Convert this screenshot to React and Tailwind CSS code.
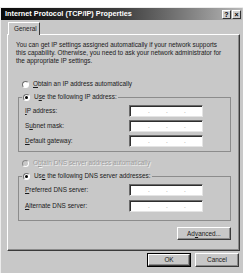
import React from "react";

function Radio({ checked }) {
  return (
    <span className="w-[7px] h-[7px] shrink-0 rounded-full border border-t-[#6e6e6e] border-l-[#6e6e6e] border-r-white border-b-white bg-white flex items-center justify-center">
      {checked && <span className="w-[3px] h-[3px] rounded-full bg-black" />}
    </span>
  );
}

function IpField() {
  return (
    <div className="w-[74px] h-[12px] bg-white border border-t-[#6a6a6a] border-l-[#6a6a6a] border-r-[#e4e4e4] border-b-[#e4e4e4] shadow-[inset_1px_1px_0_#2e2e2e] flex items-center pl-[2px] text-[#9a9a9a]">
      <span className="flex-1" />
      <span className="w-[2px] leading-[6px]">.</span>
      <span className="flex-1" />
      <span className="w-[2px] leading-[6px]">.</span>
      <span className="flex-1" />
      <span className="w-[2px] leading-[6px]">.</span>
      <span className="flex-1" />
    </div>
  );
}

function FieldRow({ children }) {
  return (
    <div className="flex items-center h-[12px] pl-[6px]">
      <span className="w-[104px]">{children}</span>
      <IpField />
    </div>
  );
}

function Button({ children, isDefault, className }) {
  return (
    <div className={isDefault ? "border border-black flex " + className : "flex " + className}>
      <div className="flex-1 flex items-center justify-center border border-t-white border-l-white border-r-[#3a3a3a] border-b-[#3a3a3a] shadow-[inset_-1px_-1px_0_#8a8a8a]">
        {children}
      </div>
    </div>
  );
}

export default function App() {
  return (
    <div className="w-[243px] h-[273px] bg-white overflow-hidden font-['Liberation_Sans',Arial,sans-serif] text-[6.4px] leading-[8px] text-[#1a1a1a]">
      <div className="h-[7px]" />
      <div className="h-[266px] bg-[#c8c8c8] border-t border-l border-[#ececec] flex flex-col">
        <div className="h-[12px] mr-[1px] bg-gradient-to-r from-[#0a0a0a] via-[#404040] to-[#b8b8b8] flex items-center pl-[4px] pr-[1px]">
          <span className="flex-1 text-white font-bold text-[7.3px]">
            Internet Protocol (TCP/IP) Properties
          </span>
          <span className="w-[9px] h-[9px] bg-[#cfcfcf] border border-t-white border-l-white border-r-[#333] border-b-[#333] flex items-center justify-center font-bold text-[7px] leading-none text-black">
            ?
          </span>
          <span className="w-[9px] h-[9px] ml-[1px] bg-[#cfcfcf] border border-t-white border-l-white border-r-[#333] border-b-[#333] flex items-center justify-center font-bold text-[7px] leading-none text-black">
            ×
          </span>
        </div>

        <div className="relative z-10 mt-[2px] mb-[-1px] ml-[7px] w-[32px] h-[13px] bg-[#c8c8c8] border-t border-l border-white border-r border-r-[#3a3a3a] rounded-t-[1px] flex items-center pl-[5px] text-[#222]">
          General
        </div>

        <div className="ml-[6px] w-[233px] h-[217px] border border-t-white border-l-white border-r-[#3a3a3a] border-b-[#3a3a3a] shadow-[inset_-1px_-1px_0_#8a8a8a] flex flex-col">
          <p className="mt-[6px] ml-[8px]">
            You can get IP settings assigned automatically if your network supports
            <br />
            this capability. Otherwise, you need to ask your network administrator for
            <br />
            the appropriate IP settings.
          </p>

          <div className="mt-[14px] ml-[14px] h-[10px] flex items-center gap-[4px]">
            <Radio />
            <span>
              <u>O</u>btain an IP address automatically
            </span>
          </div>

          <fieldset className="mt-[3px] ml-[10px] w-[213px] border border-[#8c8c8c] pb-[4px] flex flex-col gap-[3px]">
            <legend className="ml-[3px] px-[1px] h-[10px] flex items-center gap-[4px]">
              <Radio checked />
              <span>
                U<u>s</u>e the following IP address:
              </span>
            </legend>
            <div className="h-0" />
            <FieldRow>
              <u>I</u>P address:
            </FieldRow>
            <FieldRow>
              S<u>u</u>bnet mask:
            </FieldRow>
            <FieldRow>
              <u>D</u>efault gateway:
            </FieldRow>
          </fieldset>

          <div className="mt-[6px] ml-[14px] h-[10px] flex items-center gap-[4px] text-[#9c9c9c] [text-shadow:1px_1px_0_#f2f2f2]">
            <span className="w-[7px] h-[7px] shrink-0 rounded-full border border-t-[#8a8a8a] border-l-[#8a8a8a] border-r-white border-b-white bg-[#c8c8c8]" />
            <span>
              O<u>b</u>tain DNS server address automatically
            </span>
          </div>

          <fieldset className="mt-[3px] ml-[10px] w-[213px] border border-[#8c8c8c] pb-[8px] flex flex-col gap-[4px]">
            <legend className="ml-[3px] px-[1px] h-[10px] flex items-center gap-[4px]">
              <Radio checked />
              <span>
                Us<u>e</u> the following DNS server addresses:
              </span>
            </legend>
            <div className="h-0 mb-[-1px]" />
            <FieldRow>
              <u>P</u>referred DNS server:
            </FieldRow>
            <FieldRow>
              <u>A</u>lternate DNS server:
            </FieldRow>
          </fieldset>

          <div className="mt-[6px] mr-[8px] flex justify-end">
            <Button className="w-[54px] h-[13px]">
              Ad<u>v</u>anced...
            </Button>
          </div>
        </div>

        <div className="mt-[2px] mr-[4px] flex justify-end gap-[4px]">
          <Button isDefault className="w-[44px] h-[14px]">
            OK
          </Button>
          <Button className="w-[44px] h-[14px]">Cancel</Button>
        </div>
      </div>
    </div>
  );
}
